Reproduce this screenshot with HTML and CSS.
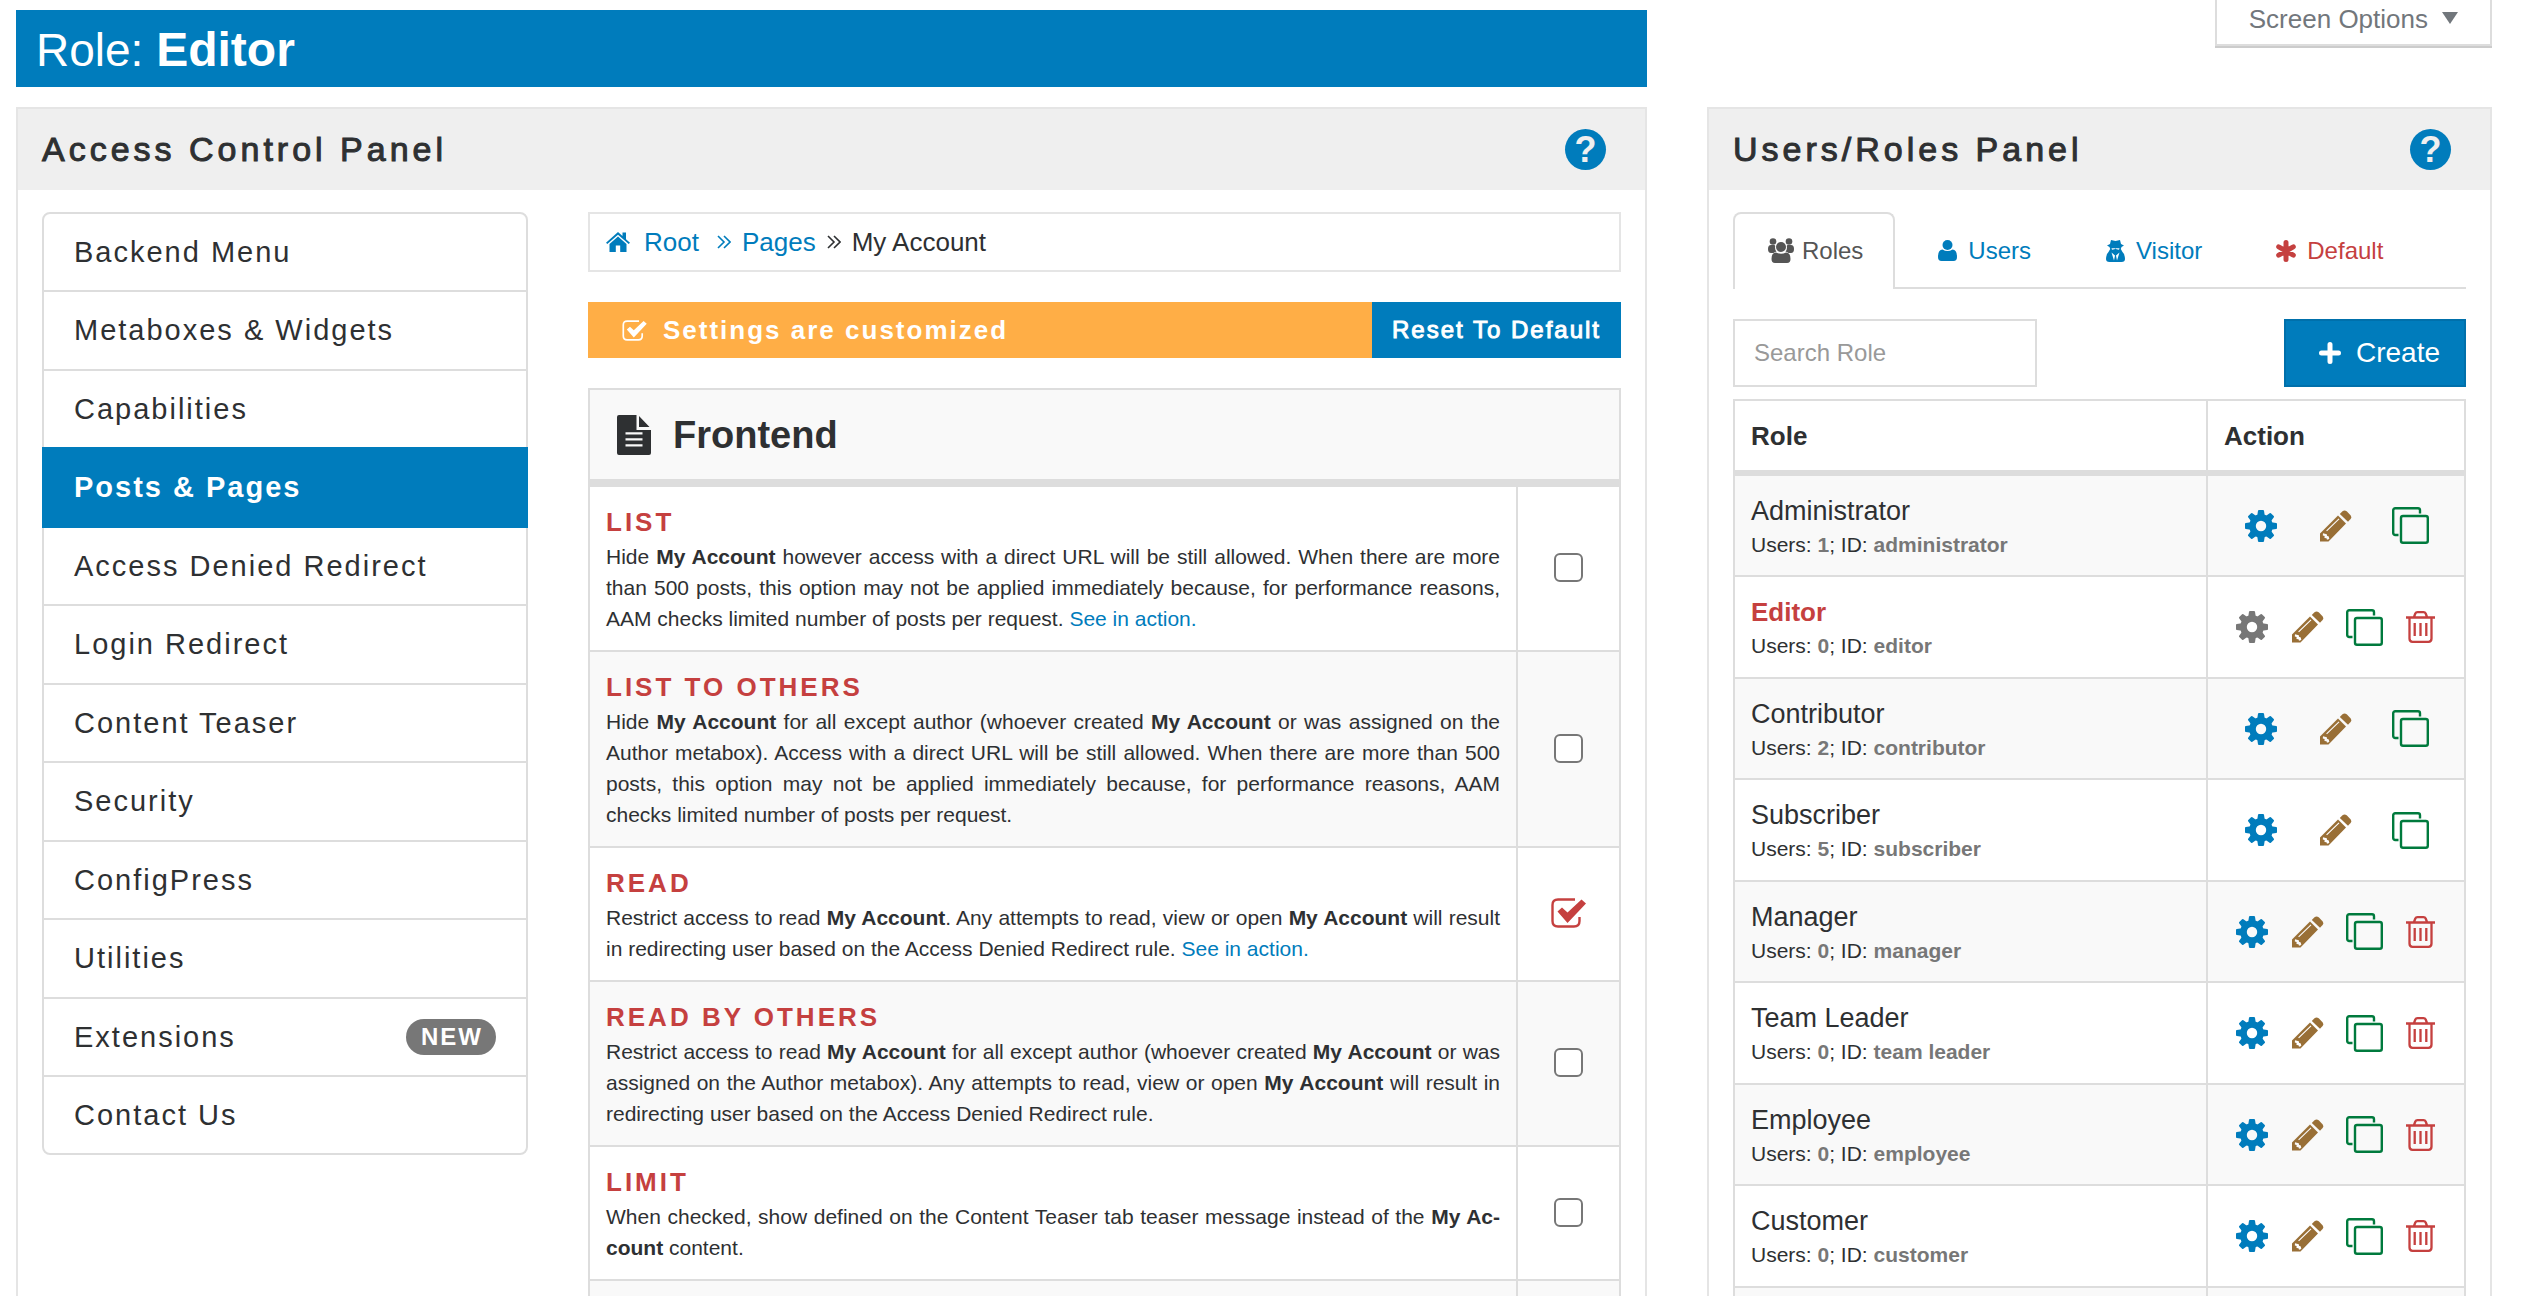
FILE: index.html
```html
<!DOCTYPE html>
<html lang="en">
<head>
<meta charset="utf-8">
<title>Access Manager</title>
<link rel="stylesheet" href="styles.css">
</head>
<body>
<svg class="sprite" aria-hidden="true">
  <symbol id="i-gear" viewBox="0 0 32 32">
    <circle cx="16" cy="16" r="8.5" fill="none" stroke="currentColor" stroke-width="6.6"/>
    <g fill="currentColor">
      <path id="tooth" d="M12.2 6 13 .8Q13.100 0 14 0H18Q18.900 0 19 .8L19.800 6Z"/>
      <use href="#tooth" transform="rotate(45 16 16)"/>
      <use href="#tooth" transform="rotate(90 16 16)"/>
      <use href="#tooth" transform="rotate(135 16 16)"/>
      <use href="#tooth" transform="rotate(180 16 16)"/>
      <use href="#tooth" transform="rotate(225 16 16)"/>
      <use href="#tooth" transform="rotate(270 16 16)"/>
      <use href="#tooth" transform="rotate(315 16 16)"/>
    </g>
  </symbol>
  <symbol id="i-pencil" viewBox="0 0 32 32">
    <path fill="currentColor" fill-rule="evenodd" d="M0 31.500V23.500L18 5.500 26 13.500 8.500 31.500ZM3 23.200 2.800 25.500 4.600 26 4.500 28 6.500 28.200 7 29.700 9.300 29 8.800 26.500 7 25.800 6.800 24.200ZM6.200 20.500 7 21.300 19.400 9.300 18.600 8.500Z"/>
    <path fill="currentColor" d="M19.800 4 22.500 1.300Q24.500-.3 26.700 1.300L30.300 5Q32 7 30.600 9L28 11.800Z"/>
  </symbol>
  <symbol id="i-copy" viewBox="0 0 37 37">
    <path fill="none" stroke="currentColor" stroke-width="2.400" d="M6.500 28H3.200A2 2 0 0 1 1.200 26V3.200A2 2 0 0 1 3.200 1.200H26A2 2 0 0 1 28 3.200V6.500"/>
    <rect x="9" y="9" width="26.800" height="26.800" rx="2" fill="none" stroke="currentColor" stroke-width="2.400"/>
  </symbol>
  <symbol id="i-trash" viewBox="0 0 29 32">
    <path fill="none" stroke="currentColor" stroke-width="2.300" d="M0 6.500H29M8 6 9.300 2.500Q9.900 1.200 11.500 1.200H17.500Q19.100 1.200 19.700 2.500L21 6M3.500 7V27.500Q3.500 30.800 6.500 30.800H22.500Q25.500 30.800 25.500 27.500V7M8.700 12V25M14.500 12V25M20.300 12V25"/>
  </symbol>
  <symbol id="i-check" viewBox="0 0 35 30">
    <path fill="none" stroke="currentColor" stroke-width="2.400" d="M24 1.500H7Q1.500 1.500 1.500 7V23Q1.500 28.500 7 28.500H23Q28.500 28.500 28.500 23V19"/>
    <path fill="currentColor" d="M6.500 13.500 11 9.500 16.500 14.500 30.500 1.500 35 5.500 16.500 25Z"/>
  </symbol>
  <symbol id="i-home" viewBox="0 0 24 20">
    <path fill="currentColor" d="M12 0 16.500 4V.5H20V7.200L24 10.800 22.700 12 12 2.800 1.300 12 0 10.800ZM12 4.600 20.500 12V20H14.200V13.500H9.800V20H3.500V12Z"/>
  </symbol>
  <symbol id="i-angles" viewBox="0 0 14 14">
    <path fill="none" stroke="currentColor" stroke-width="1.600" d="M1 1 7 7 1 13M7 1 13 7 7 13"/>
  </symbol>
  <symbol id="i-doc" viewBox="0 0 34 40">
    <path fill="currentColor" fill-rule="evenodd" d="M2 0H19.500V15H34V38Q34 40 32 40H2Q0 40 0 38V2Q0 0 2 0ZM8.500 17.200V19.600H25.500V17.200ZM8.500 23.200V25.600H25.500V23.200ZM8.500 29.200V31.600H25.500V29.200ZM22 1 32.500 12H22Z"/>
  </symbol>
  <symbol id="i-plus" viewBox="0 0 22 22">
    <path fill="none" stroke="currentColor" stroke-width="5" stroke-linecap="round" stroke-linejoin="round" d="M11 2.500V19.500M2.500 11H19.500"/>
  </symbol>
  <symbol id="i-group" viewBox="0 0 26 25">
    <g fill="currentColor">
      <circle cx="5" cy="3.500" r="3.300"/><circle cx="21" cy="3.500" r="3.300"/>
      <path d="M0 11Q0 7 3 7H6.500Q7.500 7.500 7 9.500 7 12 8.500 13.500 6 14 5.500 15H3Q0 15 0 11ZM26 11Q26 7 23 7H19.500Q18.500 7.500 19 9.500 19 12 17.500 13.500 20 14 20.500 15H23Q26 15 26 11Z"/>
      <circle cx="13" cy="9" r="5"/>
      <path d="M3.500 21Q3.500 14.500 8 14.500 13 17 18 14.500 22.500 14.500 22.500 21 22.500 25 19 25H7Q3.500 25 3.500 21Z"/>
    </g>
  </symbol>
  <symbol id="i-user" viewBox="0 0 19 21">
    <circle cx="9.500" cy="5" r="5" fill="currentColor"/>
    <path fill="currentColor" d="M0 17Q0 9.500 4.500 9.500 9.500 12.500 14.500 9.500 19 9.500 19 17 19 21 15.500 21H3.500Q0 21 0 17Z"/>
  </symbol>
  <symbol id="i-spy" viewBox="0 0 19 22">
    <path fill="currentColor" fill-rule="evenodd" d="M5 0 9.500 1 14 0 15 4 18 5.500 15.500 7 14.800 9 16.500 12 18 14Q19 17 19 19 19 22 15.500 22H3.500Q0 22 0 19 0 17 1 14L2.500 12 4.200 9 3.500 7 1 5.500 4 4ZM5.500 8.200 6 9.800 8.500 9.300 9.500 8.500 10.500 9.300 13 9.800 13.500 8.200ZM5.500 12.500 8 20.500 9 15.500ZM13.500 12.500 11 20.500 10 15.500Z"/>
  </symbol>
  <symbol id="i-star" viewBox="0 0 20 22">
    <path fill="none" stroke="currentColor" stroke-width="5" stroke-linecap="round" d="M10 2.500V19.500M2.700 6.800 17.300 15.200M17.300 6.800 2.700 15.200"/>
  </symbol>
</svg>

<div class="page">
  <main class="main-col">
    <h1 class="role-bar">Role: <strong>Editor</strong></h1>
    <section class="panel">
      <header class="panel-head">
        <h2>Access Control Panel</h2>
        <button class="help" type="button" aria-label="Help">?</button>
      </header>
      <div class="panel-body split">
        <nav class="menu">
          <a href="#backend">Backend Menu</a>
          <a href="#metaboxes">Metaboxes &amp; Widgets</a>
          <a href="#capabilities">Capabilities</a>
          <a href="#posts" class="active">Posts &amp; Pages</a>
          <a href="#denied">Access Denied Redirect</a>
          <a href="#login">Login Redirect</a>
          <a href="#teaser">Content Teaser</a>
          <a href="#security">Security</a>
          <a href="#configpress">ConfigPress</a>
          <a href="#utilities">Utilities</a>
          <a href="#extensions">Extensions <span class="badge">NEW</span></a>
          <a href="#contact">Contact Us</a>
        </nav>
        <div class="content">
          <nav class="crumbs">
            <a href="#root"><svg class="home"><use href="#i-home"/></svg>Root</a>
            <a href="#pages"><svg class="angles"><use href="#i-angles"/></svg>Pages</a>
            <span><svg class="angles"><use href="#i-angles"/></svg>My Account</span>
          </nav>
          <div class="notice">
            <p><svg class="notice-icon"><use href="#i-check"/></svg>Settings are customized</p>
            <button type="button">Reset To Default</button>
          </div>
          <table class="options">
            <thead>
              <tr><th colspan="2"><div class="group"><svg><use href="#i-doc"/></svg>Frontend</div></th></tr>
            </thead>
            <tbody>
              <tr>
                <td><label for="o1">List</label><p>Hide <b>My Account</b> however access with a direct URL will be still allowed. When there are more than 500 posts, this option may not be applied immediately because, for performance reasons, AAM checks limited number of posts per request. <a href="#v1">See in action.</a></p></td>
                <td class="tick"><span><input type="checkbox" id="o1"><svg><use href="#i-check"/></svg></span></td>
              </tr>
              <tr>
                <td><label for="o2">List To Others</label><p>Hide <b>My Account</b> for all except author (whoever created <b>My Account</b> or was assigned on the Author metabox). Access with a direct URL will be still allowed. When there are more than 500 posts, this option may not be applied immediately because, for performance reasons, AAM checks limited number of posts per request.</p></td>
                <td class="tick"><span><input type="checkbox" id="o2"><svg><use href="#i-check"/></svg></span></td>
              </tr>
              <tr>
                <td><label for="o3">Read</label><p>Restrict access to read <b>My Account</b>. Any attempts to read, view or open <b>My Account</b> will result in redirecting user based on the Access Denied Redirect rule. <a href="#v2">See in action.</a></p></td>
                <td class="tick"><span><input type="checkbox" id="o3" checked><svg><use href="#i-check"/></svg></span></td>
              </tr>
              <tr>
                <td><label for="o4">Read By Others</label><p>Restrict access to read <b>My Account</b> for all except author (whoever created <b>My Account</b> or was assigned on the Author metabox). Any attempts to read, view or open <b>My Account</b> will result in redirecting user based on the Access Denied Redirect rule.</p></td>
                <td class="tick"><span><input type="checkbox" id="o4"><svg><use href="#i-check"/></svg></span></td>
              </tr>
              <tr>
                <td><label for="o5">Limit</label><p>When checked, show defined on the Content Teaser tab teaser message instead of the <b>My Ac&shy;count</b> content.</p></td>
                <td class="tick"><span><input type="checkbox" id="o5"><svg><use href="#i-check"/></svg></span></td>
              </tr>
              <tr><td></td><td></td></tr>
            </tbody>
          </table>
        </div>
      </div>
    </section>
  </main>

  <aside class="side-col">
    <button class="screen-options" type="button">Screen Options <i></i></button>
    <section class="panel">
      <header class="panel-head">
        <h2>Users/Roles Panel</h2>
        <button class="help" type="button" aria-label="Help">?</button>
      </header>
      <div class="panel-body">
        <nav class="tabs">
          <a href="#roles" class="active"><span><svg width="26" height="25"><use href="#i-group"/></svg></span>Roles</a>
          <a href="#users"><span><svg width="19" height="21"><use href="#i-user"/></svg></span>Users</a>
          <a href="#visitor"><span><svg width="19" height="22"><use href="#i-spy"/></svg></span>Visitor</a>
          <a href="#default" class="danger"><span><svg width="20" height="22"><use href="#i-star"/></svg></span>Default</a>
        </nav>
        <div class="toolbar">
          <input type="text" placeholder="Search Role" aria-label="Search Role">
          <button type="button"><svg><use href="#i-plus"/></svg>Create</button>
        </div>
        <table class="roles">
          <colgroup><col><col class="c-action"></colgroup>
          <thead><tr><th>Role</th><th>Action</th></tr></thead>
          <tbody>
            <tr>
              <td>Administrator<small>Users: <b>1</b>; ID: <b>administrator</b></small></td>
              <td><div class="actions"><a href="#m" class="gear"><svg><use href="#i-gear"/></svg></a><a href="#e" class="pencil"><svg><use href="#i-pencil"/></svg></a><a href="#c" class="copy"><svg><use href="#i-copy"/></svg></a></div></td>
            </tr>
            <tr>
              <td><strong>Editor</strong><small>Users: <b>0</b>; ID: <b>editor</b></small></td>
              <td><div class="actions"><a href="#m" class="gear current"><svg><use href="#i-gear"/></svg></a><a href="#e" class="pencil"><svg><use href="#i-pencil"/></svg></a><a href="#c" class="copy"><svg><use href="#i-copy"/></svg></a><a href="#d" class="trash"><svg><use href="#i-trash"/></svg></a></div></td>
            </tr>
            <tr>
              <td>Contributor<small>Users: <b>2</b>; ID: <b>contributor</b></small></td>
              <td><div class="actions"><a href="#m" class="gear"><svg><use href="#i-gear"/></svg></a><a href="#e" class="pencil"><svg><use href="#i-pencil"/></svg></a><a href="#c" class="copy"><svg><use href="#i-copy"/></svg></a></div></td>
            </tr>
            <tr>
              <td>Subscriber<small>Users: <b>5</b>; ID: <b>subscriber</b></small></td>
              <td><div class="actions"><a href="#m" class="gear"><svg><use href="#i-gear"/></svg></a><a href="#e" class="pencil"><svg><use href="#i-pencil"/></svg></a><a href="#c" class="copy"><svg><use href="#i-copy"/></svg></a></div></td>
            </tr>
            <tr>
              <td>Manager<small>Users: <b>0</b>; ID: <b>manager</b></small></td>
              <td><div class="actions"><a href="#m" class="gear"><svg><use href="#i-gear"/></svg></a><a href="#e" class="pencil"><svg><use href="#i-pencil"/></svg></a><a href="#c" class="copy"><svg><use href="#i-copy"/></svg></a><a href="#d" class="trash"><svg><use href="#i-trash"/></svg></a></div></td>
            </tr>
            <tr>
              <td>Team Leader<small>Users: <b>0</b>; ID: <b>team leader</b></small></td>
              <td><div class="actions"><a href="#m" class="gear"><svg><use href="#i-gear"/></svg></a><a href="#e" class="pencil"><svg><use href="#i-pencil"/></svg></a><a href="#c" class="copy"><svg><use href="#i-copy"/></svg></a><a href="#d" class="trash"><svg><use href="#i-trash"/></svg></a></div></td>
            </tr>
            <tr>
              <td>Employee<small>Users: <b>0</b>; ID: <b>employee</b></small></td>
              <td><div class="actions"><a href="#m" class="gear"><svg><use href="#i-gear"/></svg></a><a href="#e" class="pencil"><svg><use href="#i-pencil"/></svg></a><a href="#c" class="copy"><svg><use href="#i-copy"/></svg></a><a href="#d" class="trash"><svg><use href="#i-trash"/></svg></a></div></td>
            </tr>
            <tr>
              <td>Customer<small>Users: <b>0</b>; ID: <b>customer</b></small></td>
              <td><div class="actions"><a href="#m" class="gear"><svg><use href="#i-gear"/></svg></a><a href="#e" class="pencil"><svg><use href="#i-pencil"/></svg></a><a href="#c" class="copy"><svg><use href="#i-copy"/></svg></a><a href="#d" class="trash"><svg><use href="#i-trash"/></svg></a></div></td>
            </tr>
            <tr><td></td><td></td></tr>
          </tbody>
        </table>
      </div>
    </section>
  </aside>
</div>
</body>
</html>
```
FILE: styles.css
```css
:root {
  --blue: #007cbc;
  --red: #c5403f;
  --text: #2e3032;
  --line: #ddd;
  --stripe: #f9f9f9;
}

* { box-sizing: border-box; }

body {
  margin: 0;
  background: #fff;
  color: var(--text);
  font: 26px/34px "Liberation Sans", Arial, Helvetica, sans-serif;
}

h1, h2, p { margin: 0; font-weight: 400; }
a { color: var(--blue); text-decoration: none; }
button, input { font: inherit; border-radius: 0; }
svg { display: block; flex: none; }
.sprite { position: absolute; width: 0; height: 0; }

.page {
  display: grid;
  grid-template-columns: minmax(0, 1631fr) minmax(0, 785fr);
  column-gap: 60px;
  height: 100vh;
  padding: 0 30px 0 16px;
  overflow: hidden;
}

.main-col, .side-col { display: flex; flex-direction: column; }
.main-col { padding-top: 10px; }

.role-bar {
  margin-bottom: 20px;
  padding: 14px 20px 11px;
  background: var(--blue);
  color: #fff;
  font-size: 46px;
  line-height: 52px;
}
.role-bar strong { font-size: 48px; line-height: 48px; }

.screen-options {
  display: flex;
  align-items: center;
  align-self: flex-end;
  gap: 14px;
  height: 46px;
  margin-bottom: 61px;
  padding: 0 32px 6px;
  border: 2px solid var(--line);
  border-top: 0;
  background: #fff;
  box-shadow: 0 2px 0 #ccc;
  color: #72777c;
}
.screen-options i {
  margin-bottom: 2px;
  border: 8px solid transparent;
  border-top: 12px solid #72777c;
  border-bottom: 0;
}

/* Panels */
.panel { flex: 1; border: 2px solid #e5e5e5; border-bottom: 0; }
.panel-head {
  display: flex;
  align-items: center;
  justify-content: space-between;
  height: 81px;
  padding: 0 39px 0 24px;
  background: #efefef;
}
.panel-head h2 {
  padding-bottom: 2px;
  font-size: 34px;
  letter-spacing: 4px;
  -webkit-text-stroke: 1px;
}
.help {
  width: 41px;
  height: 41px;
  padding: 0;
  border: 0;
  border-radius: 50%;
  background: var(--blue);
  color: #efefef;
  font-size: 36px;
  font-weight: 700;
  line-height: 41px;
}
.panel-body { padding: 22px 24px 0; }
.split {
  display: grid;
  grid-template-columns: minmax(0, 486fr) minmax(0, 1033fr);
  column-gap: 60px;
  align-items: start;
}

/* Left menu */
.menu { border: 2px solid var(--line); border-radius: 8px; }
.menu a {
  display: flex;
  align-items: center;
  justify-content: space-between;
  padding: 20px 30px;
  border-bottom: 2px solid var(--line);
  color: var(--text);
  font-size: 29px;
  line-height: 36px;
  letter-spacing: 2px;
}
.menu a:nth-child(even) { line-height: 37px; }
.menu a:last-child { border-bottom: 0; line-height: 36px; }
.menu a.active {
  margin: -2px -2px 0;
  padding: 22px 32px 20px;
  border-color: var(--blue);
  background: var(--blue);
  color: #fff;
  font-weight: 700;
}
.badge {
  padding: 0 13px 0 15px;
  border-radius: 18px;
  background: #777;
  color: #fff;
  font-size: 24px;
  font-weight: 700;
}

/* Breadcrumbs and notice */
.crumbs {
  display: flex;
  align-items: center;
  height: 60px;
  margin-bottom: 30px;
  padding: 0 16px;
  border: 2px solid #e5e5e5;
}
.crumbs a, .crumbs span { display: flex; align-items: center; gap: 11px; margin-right: 11px; }
.crumbs a:first-child { gap: 14px; margin-right: 18px; }
.home { width: 24px; height: 20px; }
.angles { width: 14px; height: 14px; }

.notice {
  display: flex;
  margin-bottom: 30px;
  background: #ffae46;
  color: #fff;
}
.notice p {
  display: flex;
  flex: 1;
  align-items: center;
  gap: 16px;
  padding: 0 34px;
  font-weight: 700;
  letter-spacing: 2px;
}
.notice-icon { width: 25px; height: 21px; }
.notice button {
  height: 56px;
  padding: 0 20px;
  border: 0;
  background: var(--blue);
  color: #fff;
  font-size: 24px;
  letter-spacing: 2px;
  -webkit-text-stroke: 1px;
}

/* Tables */
table { width: 100%; border-spacing: 0; border: 2px solid var(--line); border-bottom: 0; }
th, td { padding: 16px; border-bottom: 2px solid var(--line); text-align: left; }
th + th, td + td { border-left: 2px solid var(--line); }

.options th { padding: 0 27px; border-bottom-width: 8px; background: var(--stripe); }
.group {
  display: flex;
  align-items: center;
  gap: 22px;
  height: 89px;
  font-size: 38px;
}
.group svg { width: 34px; height: 40px; }
.options tbody tr:nth-child(even) { background: var(--stripe); }
.options label {
  display: block;
  color: var(--red);
  font-weight: 700;
  line-height: 38px;
  letter-spacing: 3px;
  text-transform: uppercase;
}
.options p { font-size: 21px; line-height: 31px; text-align: justify; }
.options .tick { width: 103px; padding: 0 0 2px; }
.tick span { position: relative; display: grid; place-items: center; }
.tick input {
  width: 29px;
  height: 29px;
  margin: 0;
  appearance: none;
  border: 2px solid #777;
  border-radius: 6px;
  background: #fff;
}
.tick svg { display: none; width: 35px; height: 30px; color: var(--red); }
.tick input:checked { position: absolute; opacity: 0; }
.tick input:checked + svg { display: block; }

/* Tabs */
.tabs { display: flex; gap: 4px; margin-bottom: 30px; border-bottom: 2px solid var(--line); }
.tabs a {
  display: flex;
  align-items: center;
  gap: 5px;
  margin-bottom: -2px;
  padding: 19px 30px 21px;
  border: 2px solid transparent;
  border-bottom: 0;
  border-radius: 8px 8px 0 0;
  font-size: 24px;
  line-height: 35px;
}
.tabs span { display: grid; width: 32px; place-items: center; }
.tabs .active { border-color: var(--line); background: #fff; color: #555; }
.tabs .danger { color: var(--red); }

.toolbar { display: flex; justify-content: space-between; margin-bottom: 12px; }
.toolbar input {
  width: 304px;
  height: 68px;
  padding: 0 19px;
  border: 2px solid var(--line);
  font-size: 24px;
}
.toolbar input::placeholder { color: #999; }
.toolbar button {
  display: flex;
  align-items: center;
  gap: 15px;
  height: 68px;
  padding: 0 24px 0 33px;
  border: 2px solid #0070ab;
  background: var(--blue);
  color: #fff;
  font-size: 28px;
}
.toolbar svg { width: 22px; height: 22px; }

/* Role list */
.roles { table-layout: fixed; }
.c-action { width: 258px; }
.roles th { padding: 18px 16px 17px; border-bottom-width: 6px; }
.roles tbody tr:nth-child(odd) { background: var(--stripe); }
.roles td { font-size: 27px; line-height: 34px; }
.roles td:first-child { padding: 18px 16px 14px; }
.roles strong { color: var(--red); font-size: 26px; }
.roles small { display: block; font-size: 21px; line-height: 33px; }
.roles tr:nth-child(even) small { line-height: 34px; }
.roles small b { color: #777; }
.actions { display: flex; }
.actions a { display: grid; flex: 1; place-items: center; }
.actions svg { width: 32px; height: 32px; }
.actions .copy svg { width: 37px; height: 37px; }
.actions .trash svg { width: 29px; }
.gear.current { color: #777; }
.pencil { color: #996f36; }
.copy { color: #007a3d; }
.trash { color: var(--red); }
```
